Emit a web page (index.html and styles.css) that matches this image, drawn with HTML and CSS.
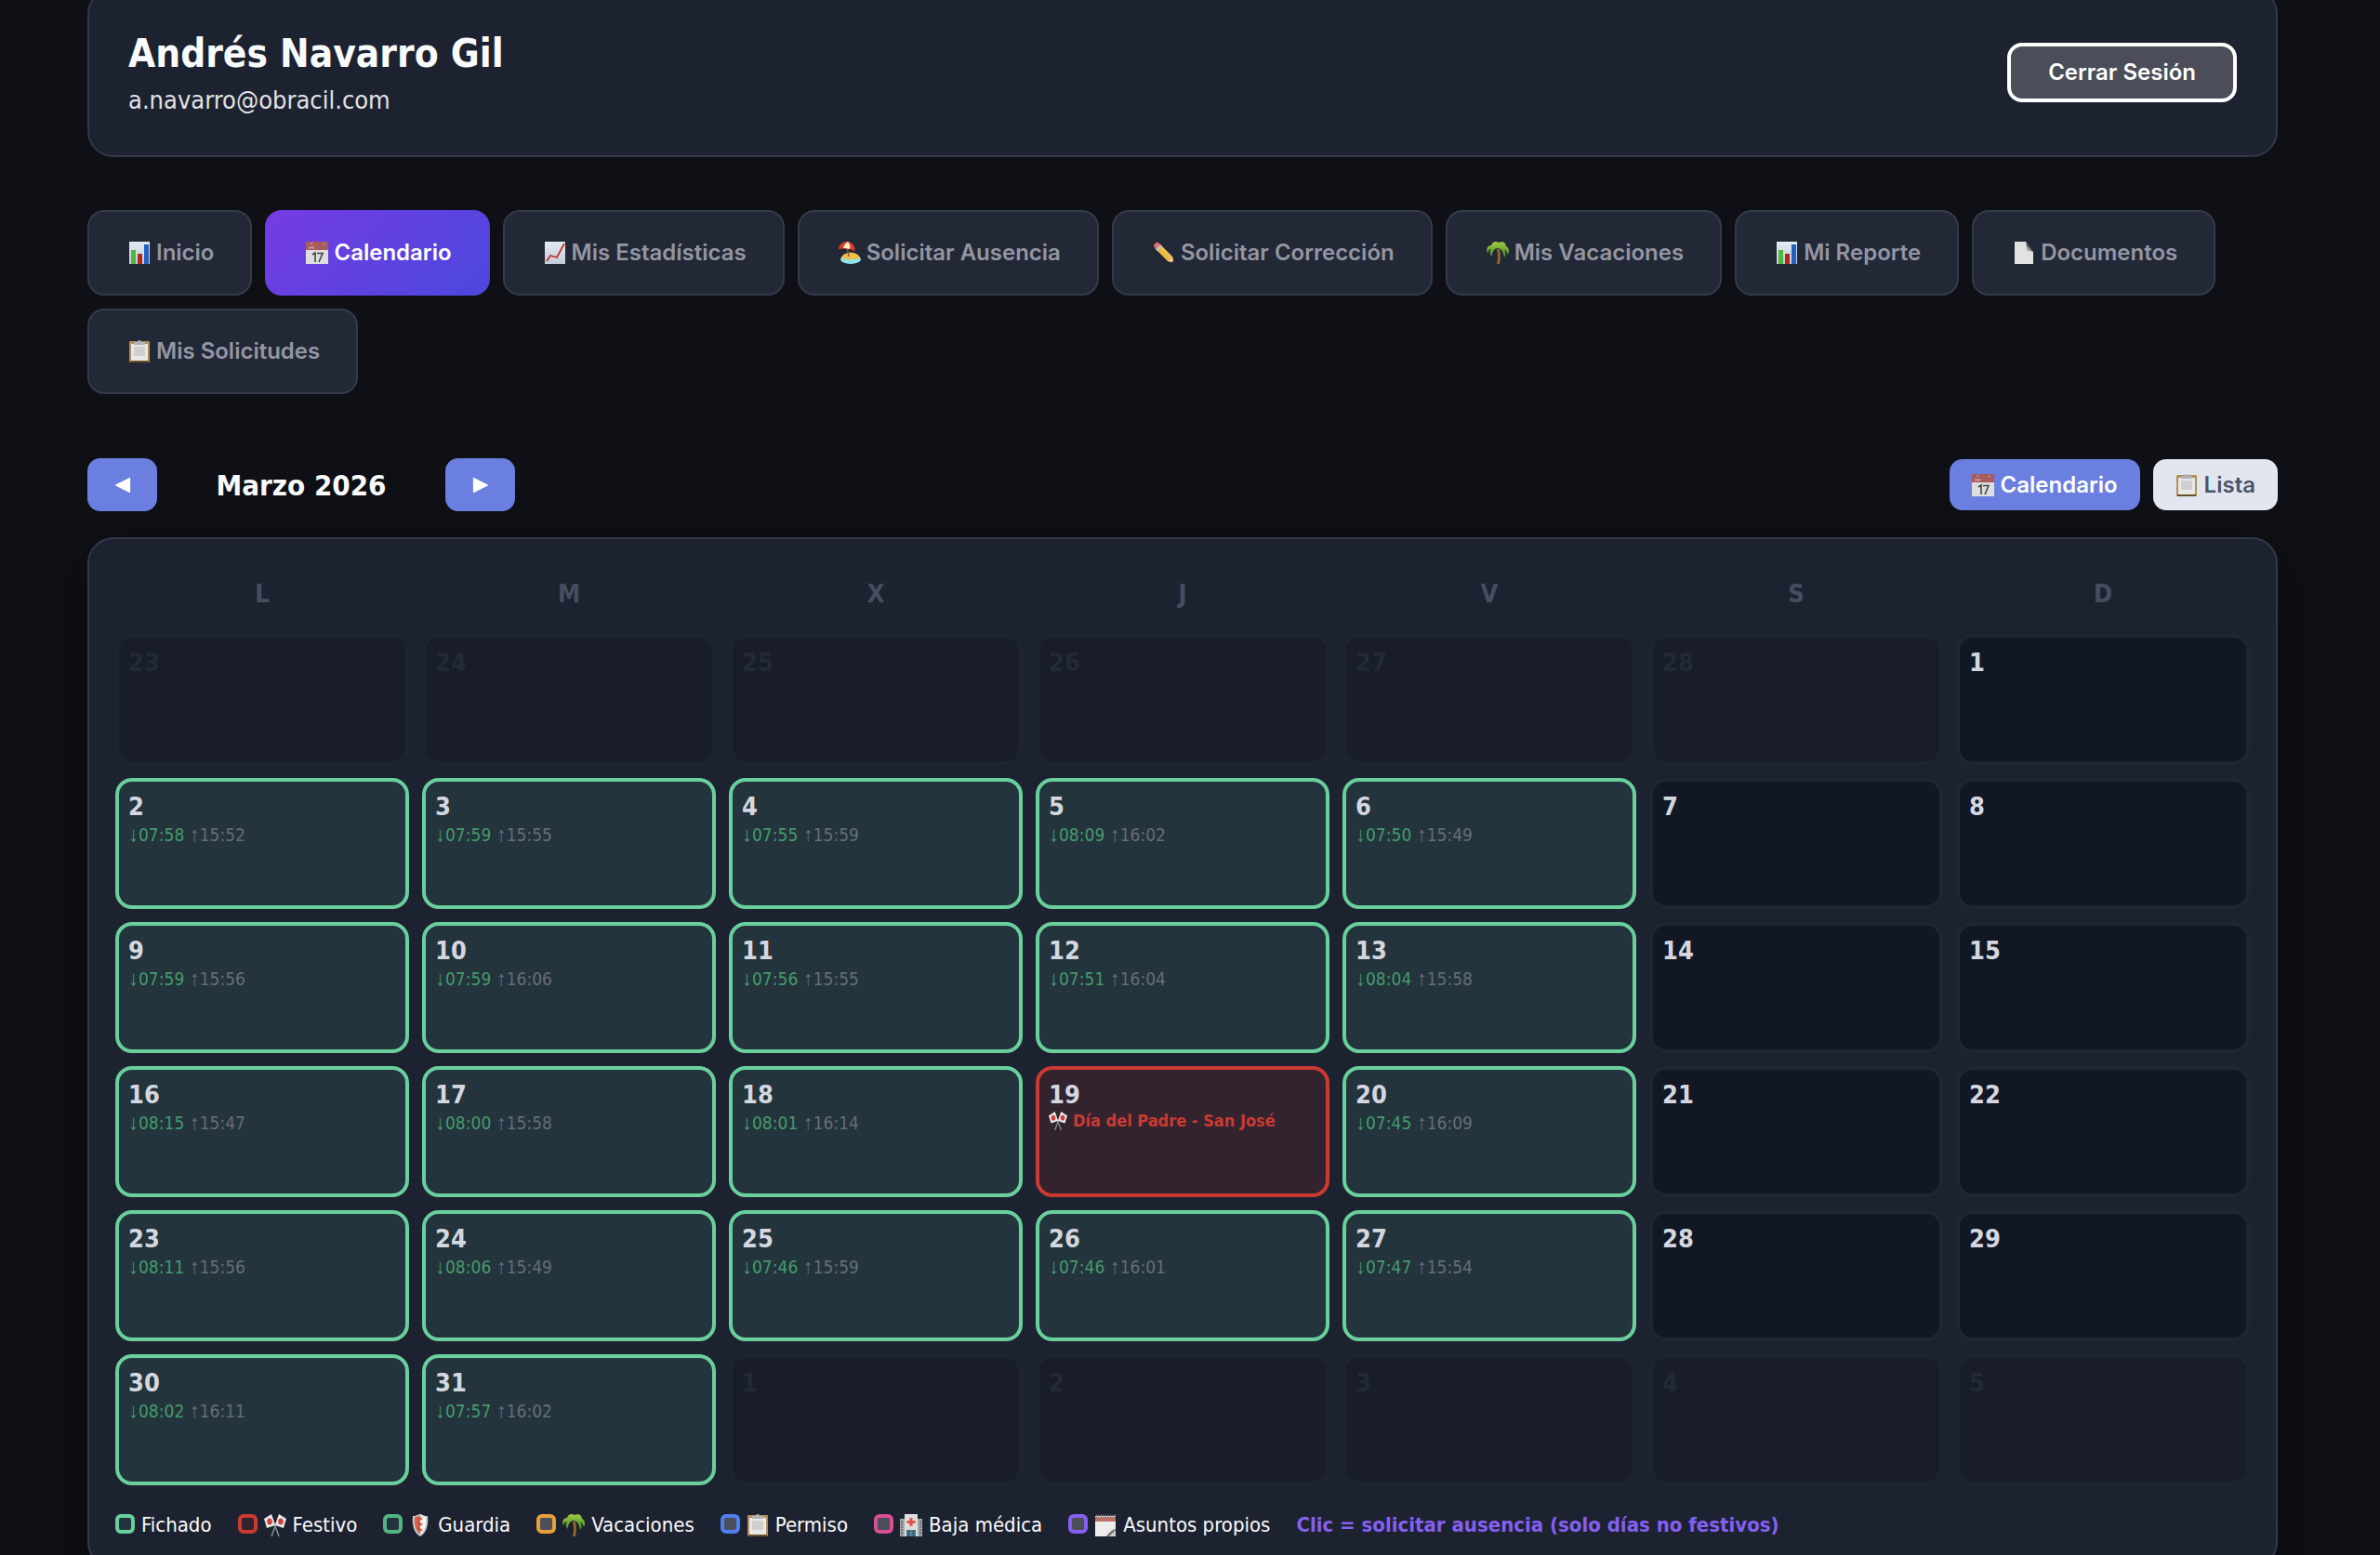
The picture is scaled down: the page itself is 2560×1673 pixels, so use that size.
FILE: index.html
```
<!DOCTYPE html>
<html lang="es">
<head>
<meta charset="UTF-8" />
<meta name="viewport" content="width=device-width, initial-scale=1" />
<title>Calendario</title>
<link rel="stylesheet" href="styles.css">
</head>
<body>

<svg class="sprite" aria-hidden="true">
  <defs>
    <linearGradient id="paper" x1="0" y1="0" x2="0" y2="1"><stop offset="0" stop-color="#e4ebf3"/><stop offset="1" stop-color="#c3cbd6"/></linearGradient>
    <linearGradient id="leaf" x1="0" y1="0" x2="0" y2="1"><stop offset="0" stop-color="#9fce3f"/><stop offset="1" stop-color="#3f8426"/></linearGradient>
    <linearGradient id="pencil" x1="0" y1="1" x2="1" y2="0"><stop offset="0" stop-color="#d99a22"/><stop offset="1" stop-color="#ffdf70"/></linearGradient>
  </defs>
  <symbol id="i-bars" viewBox="0 0 24 24">
    <path fill="url(#paper)" d="M1 0h22v24H1z"/>
    <path fill="#4cb93c" d="M3 9h5v15H3z"/><path fill="#b3261e" d="M10 13h5v11h-5z"/><path fill="#2460c4" d="M17 3h5v21h-5z"/>
  </symbol>
  <symbol id="i-cal" viewBox="0 0 24 24">
    <path fill="#dedede" d="M0 0h24v24H0z"/><path fill="#a85d5c" d="M0 0h24v9H0z"/>
    <path stroke="#d9b3b6" stroke-width="1" fill="none" d="M4 8V5l2 2 2-2v3M5 3l2-2M18 2l2 1"/>
    <path stroke="#444" stroke-width="1.6" fill="none" d="M7 14l3-2v10M12 12.500h6L14 22"/>
  </symbol>
  <symbol id="i-trend" viewBox="0 0 24 24">
    <path fill="url(#paper)" d="M1 0h22v24H1z"/>
    <path fill="none" stroke="#c9302a" stroke-width="1.8" d="M3 21l4-6 7 2L22 2"/>
  </symbol>
  <symbol id="i-beach" viewBox="0 0 24 24">
    <ellipse cx="13" cy="19" rx="11" ry="5" fill="#8fe6e4"/><path fill="#f2bd4c" d="M3 17c3-7 17-7 20 0-4 3-16 3-20 0z"/>
    <path stroke="#8a5a30" stroke-width="1.500" d="M9 6l2 10"/>
    <path fill="#dc3a2b" d="M0 8C1 1 8-2 13 1c4 2 5 6 4 9-5-3-11-3-17-2z"/>
    <path fill="#fff0c2" d="M5 7C6 3 8 1 10 0c2 2 3 5 2 8-3-1-5-1-7-1z"/>
  </symbol>
  <symbol id="i-pencil" viewBox="0 0 24 24">
    <path fill="url(#pencil)" d="M3 8l5-5 13 13 1 6-6-1z"/><path fill="#e8696c" d="M1 5c0-3 3-5 5-4l2 2-5 5z"/>
    <path fill="#b9bfc7" d="M3 8l5-5 2 2-5 5z"/><path fill="#ecc791" d="M16 21l5-5 2 7z"/><path fill="#333" d="M23.500 24l-1-4-2.500 2.500z"/>
  </symbol>
  <symbol id="i-palm" viewBox="0 0 24 24">
    <path fill="#97682c" d="M11 8h3c1 5 1 10 0 16h-3c2-6 1-11 0-16z"/>
    <path fill="url(#leaf)" d="M12 7C9 7 6 10 6 16 3 14 3 10 5 8c-2 0-4 2-4 5C-1 8 1 4 5 4c1-4 5-5 8-3 4-2 8 0 8 4 3 1 4 5 2 9-1-3-2-5-4-5 2 2 2 6 0 8-1-6-3-10-7-10z"/>
  </symbol>
  <symbol id="i-doc" viewBox="0 0 24 24">
    <path fill="#e2e2e2" d="M2 0h12l8 11v13H2z"/><path fill="#4a4a4a" d="M14 0l8 11c-2-1-5-2-7-1 0-4 0-7-1-10z"/><path fill="#aaa" d="M14 3c1 2 1 5 1 7l5 0z"/>
  </symbol>
  <symbol id="i-clip" viewBox="0 0 24 24">
    <rect x="1" y="1" width="22" height="23" rx="1" fill="#b38f57"/><path fill="#e9e9e9" d="M3 4h18v18H3z"/>
    <path fill="#cfcfcf" d="M6 7h12v10H6z"/><path fill="#aeb3b8" d="M6 2h4a2 2 0 0 1 4 0h4v3H6z"/><path fill="#6b4d21" d="M2 22h20v2H2z"/>
  </symbol>
  <symbol id="i-flags" viewBox="0 0 24 24">
    <path stroke="#8d9097" stroke-width="1.400" d="M8 24L16 2M16 24L8 2"/>
    <path fill="#e9eaec" d="M0 5l8-5 4 12-9 3zM24 5l-8-5-4 12 9 3z"/>
    <ellipse cx="6" cy="8" rx="2.800" ry="3.500" fill="#d2403c"/><ellipse cx="18" cy="8" rx="2.800" ry="3.500" fill="#d2403c"/>
  </symbol>
  <symbol id="i-shield" viewBox="0 0 24 24">
    <path fill="#c9ced3" d="M4 2c5 0 6-2 8-2s3 2 8 2c1 9-1 18-8 22C5 20 3 11 4 2z"/>
    <path fill="#d9634d" d="M6 3c3 0 5-1 6-2v21C7 18 5 11 6 3z"/><path fill="#f3f3f3" d="M12 1c1 1 3 2 6 2 1 8-1 15-6 19z"/>
    <path fill="#d9634d" d="M12 3l3 2-3 2zM12 9l3 2-3 2zM12 15l3 2-3 2z"/><path stroke="#ad3f30" d="M10 4v14" stroke-dasharray="3 2"/>
  </symbol>
  <symbol id="i-hospital" viewBox="0 0 24 24">
    <path fill="#a8a9a6" d="M0 5h24v19H0z"/><path fill="#dddedb" d="M5 0h14v24H5z"/>
    <path stroke="#4d6672" stroke-width="1.500" stroke-dasharray="2 1" d="M2 7v16M22 7v16"/>
    <path fill="#e0524f" d="M10.500 4h3v3h3v3h-3v3h-3v-3h-3V7h3z"/><path fill="#3f6b80" d="M7 17h10v7H7z"/><path stroke="#7f99a5" d="M12 17v7"/>
  </symbol>
  <symbol id="i-notepad" viewBox="0 0 24 24">
    <path fill="#eeedeb" d="M1 2h22v14l-7 8H1z"/><path fill="#b8706b" d="M1 3h22v5H1z"/>
    <path stroke="#8e9299" stroke-width="3" stroke-dasharray="1 1.500" d="M2 2h21"/><path fill="#777" d="M23 16c-5 1-7 4-10 8h3z"/><path fill="#d0d0ce" d="M23 17v7h-7z"/>
  </symbol>
</svg>

<div class="container">

  <header class="card header">
    <div>
      <h1 class="user-name">Andrés Navarro Gil</h1>
      <p class="user-email">a.navarro@obracil.com</p>
    </div>
    <button class="logout">Cerrar Sesión</button>
  </header>

  <nav class="tabs">
    <button class="tab"><svg class="icon"><use href="#i-bars"/></svg>Inicio</button>
    <button class="tab active"><svg class="icon"><use href="#i-cal"/></svg>Calendario</button>
    <button class="tab"><svg class="icon"><use href="#i-trend"/></svg>Mis Estadísticas</button>
    <button class="tab"><svg class="icon"><use href="#i-beach"/></svg>Solicitar Ausencia</button>
    <button class="tab"><svg class="icon"><use href="#i-pencil"/></svg>Solicitar Corrección</button>
    <button class="tab"><svg class="icon"><use href="#i-palm"/></svg>Mis Vacaciones</button>
    <button class="tab"><svg class="icon"><use href="#i-bars"/></svg>Mi Reporte</button>
    <button class="tab"><svg class="icon"><use href="#i-doc"/></svg>Documentos</button>
    <button class="tab"><svg class="icon"><use href="#i-clip"/></svg>Mis Solicitudes</button>
  </nav>

  <div class="toolbar">
    <div class="month-nav">
      <button class="arrow" aria-label="Mes anterior"><svg viewBox="0 0 16 16"><path d="M14 2v12L2 8z"/></svg></button>
      <h2 class="month">Marzo 2026</h2>
      <button class="arrow" aria-label="Mes siguiente"><svg viewBox="0 0 16 16"><path d="M2 2v12l12-6z"/></svg></button>
    </div>
    <div class="views">
      <button class="view active"><svg class="icon"><use href="#i-cal"/></svg>Calendario</button>
      <button class="view"><svg class="icon"><use href="#i-clip"/></svg>Lista</button>
    </div>
  </div>

  <main class="card calendar">
    <table class="month-grid">
      <thead>
        <tr><th>L</th><th>M</th><th>X</th><th>J</th><th>V</th><th>S</th><th>D</th></tr>
      </thead>
      <tbody>
        <tr>
          <td class="other"><b>23</b></td>
          <td class="other"><b>24</b></td>
          <td class="other"><b>25</b></td>
          <td class="other"><b>26</b></td>
          <td class="other"><b>27</b></td>
          <td class="other"><b>28</b></td>
          <td><b>1</b></td>
        </tr>
        <tr>
          <td class="worked"><b>2</b><p><span class="in"><i>↓</i>07:58</span> <i>↑</i>15:52</p></td>
          <td class="worked"><b>3</b><p><span class="in"><i>↓</i>07:59</span> <i>↑</i>15:55</p></td>
          <td class="worked"><b>4</b><p><span class="in"><i>↓</i>07:55</span> <i>↑</i>15:59</p></td>
          <td class="worked"><b>5</b><p><span class="in"><i>↓</i>08:09</span> <i>↑</i>16:02</p></td>
          <td class="worked"><b>6</b><p><span class="in"><i>↓</i>07:50</span> <i>↑</i>15:49</p></td>
          <td><b>7</b></td>
          <td><b>8</b></td>
        </tr>
        <tr>
          <td class="worked"><b>9</b><p><span class="in"><i>↓</i>07:59</span> <i>↑</i>15:56</p></td>
          <td class="worked"><b>10</b><p><span class="in"><i>↓</i>07:59</span> <i>↑</i>16:06</p></td>
          <td class="worked"><b>11</b><p><span class="in"><i>↓</i>07:56</span> <i>↑</i>15:55</p></td>
          <td class="worked"><b>12</b><p><span class="in"><i>↓</i>07:51</span> <i>↑</i>16:04</p></td>
          <td class="worked"><b>13</b><p><span class="in"><i>↓</i>08:04</span> <i>↑</i>15:58</p></td>
          <td><b>14</b></td>
          <td><b>15</b></td>
        </tr>
        <tr>
          <td class="worked"><b>16</b><p><span class="in"><i>↓</i>08:15</span> <i>↑</i>15:47</p></td>
          <td class="worked"><b>17</b><p><span class="in"><i>↓</i>08:00</span> <i>↑</i>15:58</p></td>
          <td class="worked"><b>18</b><p><span class="in"><i>↓</i>08:01</span> <i>↑</i>16:14</p></td>
          <td class="holiday"><b>19</b><p><svg class="icon"><use href="#i-flags"/></svg>Día del Padre - San José</p></td>
          <td class="worked"><b>20</b><p><span class="in"><i>↓</i>07:45</span> <i>↑</i>16:09</p></td>
          <td><b>21</b></td>
          <td><b>22</b></td>
        </tr>
        <tr>
          <td class="worked"><b>23</b><p><span class="in"><i>↓</i>08:11</span> <i>↑</i>15:56</p></td>
          <td class="worked"><b>24</b><p><span class="in"><i>↓</i>08:06</span> <i>↑</i>15:49</p></td>
          <td class="worked"><b>25</b><p><span class="in"><i>↓</i>07:46</span> <i>↑</i>15:59</p></td>
          <td class="worked"><b>26</b><p><span class="in"><i>↓</i>07:46</span> <i>↑</i>16:01</p></td>
          <td class="worked"><b>27</b><p><span class="in"><i>↓</i>07:47</span> <i>↑</i>15:54</p></td>
          <td><b>28</b></td>
          <td><b>29</b></td>
        </tr>
        <tr>
          <td class="worked"><b>30</b><p><span class="in"><i>↓</i>08:02</span> <i>↑</i>16:11</p></td>
          <td class="worked"><b>31</b><p><span class="in"><i>↓</i>07:57</span> <i>↑</i>16:02</p></td>
          <td class="other"><b>1</b></td>
          <td class="other"><b>2</b></td>
          <td class="other"><b>3</b></td>
          <td class="other"><b>4</b></td>
          <td class="other"><b>5</b></td>
        </tr>
      </tbody>
    </table>

    <div class="legend">
      <span class="key"><span class="swatch green"></span>Fichado</span>
      <span class="key"><span class="swatch red"></span><svg class="icon"><use href="#i-flags"/></svg>Festivo</span>
      <span class="key"><span class="swatch guard"></span><svg class="icon"><use href="#i-shield"/></svg>Guardia</span>
      <span class="key"><span class="swatch orange"></span><svg class="icon"><use href="#i-palm"/></svg>Vacaciones</span>
      <span class="key"><span class="swatch blue"></span><svg class="icon"><use href="#i-clip"/></svg>Permiso</span>
      <span class="key"><span class="swatch pink"></span><svg class="icon"><use href="#i-hospital"/></svg>Baja médica</span>
      <span class="key"><span class="swatch purple"></span><svg class="icon"><use href="#i-notepad"/></svg>Asuntos propios</span>
      <strong class="hint">Clic = solicitar ausencia (solo días no festivos)</strong>
    </div>
  </main>

</div>

</body>
</html>
```
FILE: styles.css
```
* { box-sizing: border-box; }

body {
  margin: 0;
  padding: 0 110px 0 94px;
  background: #0f1015;
  color: #f9fafb;
  font-family: Tahoma, 'DejaVu Sans Condensed', 'Noto Sans', sans-serif;
  font-size: 22px;
}

h1, h2, p { margin: 0; }

button {
  font-family: Inter, sans-serif;
  font-size: 24px;
  font-weight: 600;
  line-height: 28px;
  border: none;
  cursor: pointer;
}

.sprite { position: absolute; width: 0; height: 0; }
.icon { width: 24px; height: 24px; flex: none; }

.container { margin-top: -13px; }

.card {
  background: #1d2230;
  border: 2px solid #313849;
  border-radius: 28px;
}

.header {
  display: flex;
  justify-content: space-between;
  align-items: center;
  height: 182px;
  padding: 0 42px;
}

.user-name { font-size: 42px; line-height: 60px; }
.user-email { font-size: 27px; line-height: 40px; color: #e1e2e5; }

.logout {
  padding: 14px 40px;
  background: #4b4e59;
  color: #fff;
  border: 4px solid #fff;
  border-radius: 16px;
}

.tabs {
  display: flex;
  flex-wrap: wrap;
  gap: 14px;
  margin-top: 57px;
}

.tab {
  display: flex;
  align-items: center;
  gap: 6px;
  height: 92px;
  padding: 0 39px 0 42px;
  background: #222836;
  color: #9496a3;
  border: 2px solid #333a4a;
  border-radius: 18px;
}

.tab.active {
  background: linear-gradient(135deg, #753ce3, #4b47dc);
  color: #fff;
  border-color: transparent;
  background-origin: border-box;
}

.toolbar {
  display: flex;
  justify-content: space-between;
  align-items: center;
  margin: 69px 0 28px;
}

.month-nav, .views { display: flex; align-items: center; gap: 14px; }

.month {
  min-width: 282px;
  text-align: center;
  font-size: 31px;
  line-height: 40px;
}

.arrow {
  display: flex;
  align-items: center;
  justify-content: center;
  width: 75px;
  height: 57px;
  background: #6b7fe0;
  border-radius: 14px;
}

.arrow svg {
  width: 20px;
  height: 20px;
  fill: #fff;
  stroke: #fff;
  stroke-width: 1;
  stroke-linejoin: round;
}

.view {
  display: flex;
  align-items: center;
  gap: 7px;
  height: 55px;
  padding: 0 24px;
  background: #e2e6ef;
  color: #4c5369;
  border-radius: 14px;
}

.view.active { background: #6b7fe0; color: #fff; }

.calendar {
  padding: 14px 14px 28px;
  box-shadow: 0 20px 64px rgba(0, 0, 0, 0.4);
}

.month-grid {
  width: 100%;
  table-layout: fixed;
  border-collapse: separate;
  border-spacing: 14px;
}

.month-grid th {
  height: 60px;
  padding: 0;
  font-size: 27px;
  color: #474d60;
}

.month-grid td {
  height: 141px;
  padding: 11px 10px;
  vertical-align: top;
  background: #111725;
  border: 4px solid #1f2533;
  border-radius: 18px;
}

.month-grid b {
  display: block;
  font-size: 27px;
  line-height: 32px;
  color: #d4d7df;
}

.month-grid p {
  font-size: 19px;
  line-height: 28px;
  color: #666c7a;
}

.month-grid i {
  font-family: 'Liberation Sans', sans-serif;
  font-size: 22px;
  font-style: normal;
  line-height: 20px;
}

.month-grid .in { color: #459a6c; }

.month-grid .other { background: #181d29; border-color: #1d2330; }
.month-grid .other b { color: #232937; }
.month-grid .worked { background: #23343c; border-color: #69d09d; }
.month-grid .holiday { background: #33232f; border-color: #cb3a31; }

.month-grid .holiday p {
  display: flex;
  align-items: center;
  gap: 6px;
  font-size: 18px;
  line-height: 24px;
  font-weight: bold;
  color: #cb3a31;
}

.month-grid .holiday .icon { width: 20px; height: 20px; }

.legend {
  display: flex;
  flex-wrap: wrap;
  gap: 14px 28px;
  margin: 13px 14px 0;
  line-height: 32px;
}

.key { display: flex; align-items: center; gap: 7px; }

.swatch {
  width: 21px;
  height: 21px;
  margin-bottom: 4px;
  border: 4px solid;
  border-radius: 6px;
  background: #4b4e5b;
}

.green { border-color: #69d09d; background: #23343c; }
.red { border-color: #cb3a31; background: #33232f; }
.guard { border-color: #52b482; background: #23343c; }
.orange { border-color: #e7a035; }
.blue { border-color: #4d80ee; }
.pink { border-color: #d94f94; }
.purple { border-color: #8560f0; }

.hint { color: #8560f0; }
```
